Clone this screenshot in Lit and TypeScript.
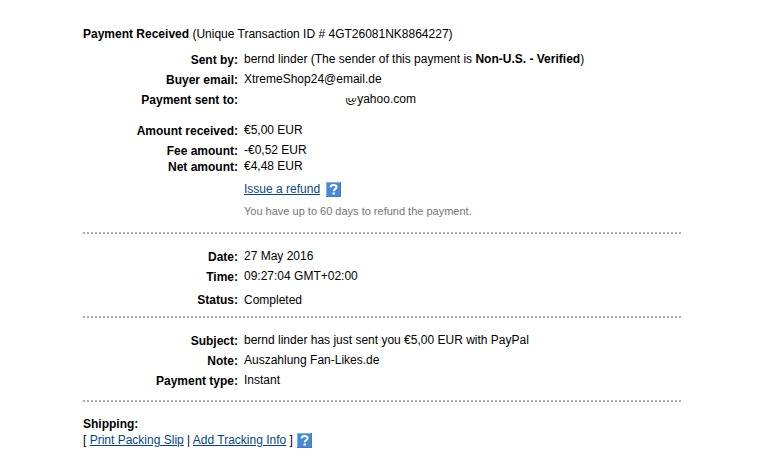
import { LitElement, html, css } from "lit";
import { customElement, property } from "lit/decorators.js";

@customElement("help-button")
export class HelpButton extends LitElement {
  @property() topic = "";

  static styles = css`
    :host {
      display: inline-flex;
    }
    .help {
      display: block;
      width: 15px;
      height: 15px;
      margin: 0;
      padding: 0;
      border: 0;
      background: none;
      cursor: pointer;
    }
    .icon {
      display: block;
    }
  `;

  render() {
    return html`
      <button class="help" type="button" aria-label=${this.topic}>
        <svg class="icon" width="15" height="15" viewBox="0 0 15 15" aria-hidden="true">
          <rect width="15" height="15" fill="#7fb4ea" />
          <path d="M14 0h1v15H0v-1h14z" fill="#55779c" />
          <rect x="1" y="1" width="13" height="13" fill="#4389d8" />
          <path d="M4.500 5.500C4.500 3.600 5.800 3 7.500 3s3 .800 3 2.300C10.500 7.200 7.700 7 7.700 9.300" fill="none" stroke="#fff" stroke-width="2" />
          <rect x="6.500" y="10.500" width="2.400" height="2" fill="#fff" />
        </svg>
      </button>
    `;
  }
}

@customElement("app-root")
export class AppRoot extends LitElement {
  static styles = css`
    :host {
      display: block;
      background: #fff;
      color: #000;
      font: 12px/16px "Liberation Sans", Arial, sans-serif;
    }
    .page {
      max-width: 600px;
      margin: 0 92px 0 83px;
      padding: 26px 0 20px;
    }
    .title,
    .subtitle {
      margin: 0;
      font-size: 12px;
      line-height: 16px;
      font-weight: 400;
    }
    .subtitle {
      font-weight: 700;
    }
    .details {
      width: 100%;
      border-collapse: collapse;
    }
    .first {
      margin-top: 7px;
    }
    .label {
      width: 155px;
      padding: 4px 0 0;
      line-height: 14px;
      text-align: right;
      vertical-align: top;
      font-weight: 700;
    }
    .value {
      padding: 2px 0 2px 6px;
      vertical-align: top;
    }
    .gap .label {
      padding-top: 15px;
    }
    .gap .value {
      padding-top: 13px;
    }
    .joined .value {
      padding-bottom: 0;
    }
    .tight .label {
      padding-top: 2px;
    }
    .tight .value {
      padding-top: 0;
    }
    .loose .label {
      padding-top: 7px;
    }
    .loose .value {
      padding-top: 6px;
    }
    .masked {
      padding-left: 107px;
    }
    .at {
      display: inline-block;
      clip-path: inset(7px 0 0 0);
    }
    .action {
      display: flex;
      align-items: center;
      gap: 4px;
    }
    .refund {
      padding-top: 5px;
    }
    .refund .action {
      gap: 6px;
    }
    .hint {
      padding-top: 4px;
      font-size: 11px;
      color: #757575;
    }
    .rule {
      height: 2px;
      margin: 11px 0 12px;
      border: 0;
      background: repeating-linear-gradient(90deg, #aaa 0 2px, #fff 2px 4px);
    }
    .rule.near {
      margin-top: 6px;
    }
    .rule.last {
      margin: 10px 0 14px;
    }
    .link {
      color: #084482;
    }
  `;

  private row(label: string, value: unknown, kind = "") {
    return html`<tr class=${kind}>
      <th class="label" scope="row">${label}</th>
      <td class="value">${value}</td>
    </tr>`;
  }

  render() {
    return html`
      <main class="page">
        <h1 class="title"><b>Payment Received</b> (Unique Transaction ID # 4GT26081NK8864227)</h1>
        <table class="details first">
          <tbody>
            ${this.row("Sent by:", html`bernd linder (The sender of this payment is <b>Non-U.S. - Verified</b>)`)}
            ${this.row("Buyer email:", "XtremeShop24@email.de")}
            <tr>
              <th class="label" scope="row">Payment sent to:</th>
              <td class="value masked"><span class="at">@</span>yahoo.com</td>
            </tr>
            ${this.row("Amount received:", "€5,00 EUR", "gap")}
            ${this.row("Fee amount:", "-€0,52 EUR", "joined")}
            ${this.row("Net amount:", "€4,48 EUR", "tight")}
            <tr>
              <td></td>
              <td class="value refund">
                <div class="action">
                  <a class="link" href="#refund">Issue a refund</a>
                  <help-button topic="Help with refunds"></help-button>
                </div>
              </td>
            </tr>
            <tr>
              <td></td>
              <td class="value hint">You have up to 60 days to refund the payment.</td>
            </tr>
          </tbody>
        </table>
        <hr class="rule" />
        <table class="details">
          <tbody>
            ${this.row("Date:", "27 May 2016")}
            ${this.row("Time:", "09:27:04 GMT+02:00")}
            ${this.row("Status:", "Completed", "loose")}
          </tbody>
        </table>
        <hr class="rule near" />
        <table class="details">
          <tbody>
            ${this.row("Subject:", "bernd linder has just sent you €5,00 EUR with PayPal")}
            ${this.row("Note:", "Auszahlung Fan-Likes.de")}
            ${this.row("Payment type:", "Instant")}
          </tbody>
        </table>
        <hr class="rule last" />
        <h2 class="subtitle">Shipping:</h2>
        <div class="action">
          <span>[ <a class="link" href="#slip">Print Packing Slip</a> | <a class="link" href="#tracking">Add Tracking Info</a> ]</span>
          <help-button topic="Help with shipping"></help-button>
        </div>
      </main>
    `;
  }
}
